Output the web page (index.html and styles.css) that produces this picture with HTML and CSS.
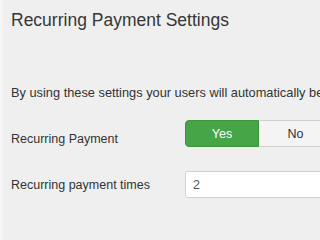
FILE: index.html
```html
<!DOCTYPE html>
<html>
<head>
<meta charset="utf-8">
<link rel="stylesheet" href="styles.css">
</head>
<body>
<div class="panel">
  <h2 class="title">Recurring Payment Settings</h2>
  <p class="intro">By using these settings your users will automatically be charged again for their subscription.</p>
  <div class="row row-first">
    <label class="label label-toggle">Recurring Payment</label>
    <div class="toggle">
      <span class="btn btn-yes">Yes</span>
      <span class="btn btn-no">No</span>
    </div>
  </div>
  <div class="row">
    <label class="label label-input">Recurring payment times</label>
    <div class="input">2</div>
  </div>
</div>
</body>
</html>
```

FILE: styles.css
```css
html {
  background: #efefef;
  overflow: hidden;
}
html, body {
  margin: 0;
  padding: 0;
}
body {
  background: #efefef;
  font-family: "Liberation Sans", Arial, sans-serif;
  color: #333;
}
.panel {
  border-left: 3px solid #f5f5f5;
  padding-left: 8px;
  min-height: 100vh;
  box-sizing: border-box;
  overflow: hidden;
}
.title {
  margin: 9px 0 0 0;
  font-size: 17.5px;
  line-height: 22px;
  font-weight: normal;
  color: #363636;
  white-space: nowrap;
}
.intro {
  margin: 53px 0 0 0;
  font-size: 12.8px;
  line-height: 18px;
  white-space: nowrap;
}
.row {
  display: flex;
  margin-top: 23px;
  white-space: nowrap;
}
.row-first {
  margin-top: 18px;
}
.label {
  flex: 0 0 174px;
  font-size: 12.5px;
  line-height: 18px;
}
.label-toggle {
  padding-top: 10px;
}
.label-input {
  padding-top: 5px;
}
.toggle {
  display: flex;
  flex-shrink: 0;
}
.btn {
  box-sizing: border-box;
  width: 74px;
  height: 27px;
  display: flex;
  align-items: center;
  justify-content: center;
  font-size: 12.5px;
  flex-shrink: 0;
}
.btn-yes {
  background: #46a546;
  border: 1px solid #3d943d;
  color: #fff;
  border-radius: 4px 0 0 4px;
}
.btn-no {
  background: #f4f4f4;
  border: 1px solid #cfcfcf;
  border-left: none;
  color: #333;
}
.input {
  box-sizing: border-box;
  flex: 0 0 220px;
  height: 27px;
  background: #fff;
  border: 1px solid #d0d0d0;
  border-radius: 3px;
  padding: 0 7px;
  display: flex;
  align-items: center;
  font-size: 12.5px;
  color: #555;
}
```
